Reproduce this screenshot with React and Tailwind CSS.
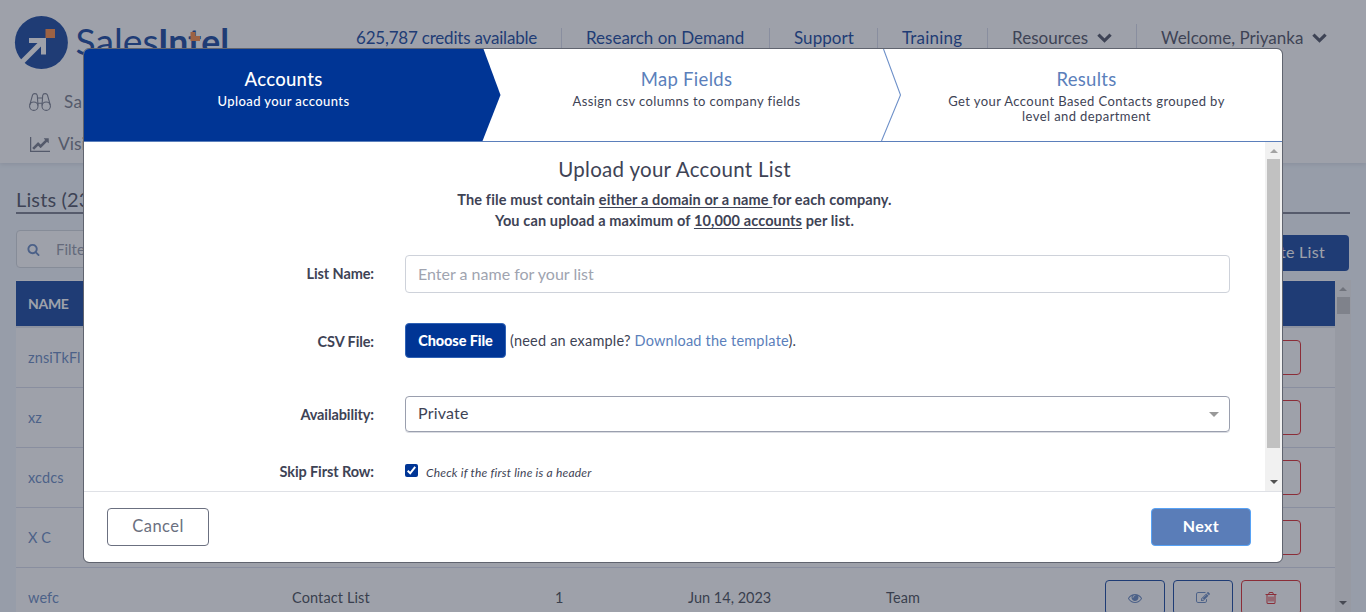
import React from 'react';

const paths = {
  chart: 'M2048 1536v128h-2048v-1536h128v1408h1920zm-128-1248v435q0 21-19.5 29.5t-35.5-7.5l-121-121-633 633q-10 10-23 10t-23-10l-233-233-416 416-192-192 585-585q10-10 23-10t23 10l233 233 464-464-121-121q-16-16-7.5-35.5t29.5-19.5h435q14 0 23 9t9 23z',
  eye: 'M1664 960q-152-236-381-353 61 104 61 225 0 185-131.5 316.5t-316.5 131.5-316.5-131.5-131.5-316.5q0-121 61-225-229 117-381 353 133 205 333.5 326.5t434.5 121.5 434.5-121.5 333.5-326.5zm-720-384q0-20-14-34t-34-14q-125 0-214.5 89.5t-89.5 214.5q0 20 14 34t34 14 34-14 14-34q0-86 61-147t147-61q20 0 34-14t14-34zm848 384q0 34-20 69-140 230-376.5 368.5t-499.5 138.5-499.5-139-376.5-368q-20-35-20-69t20-69q140-229 376.5-368t499.5-139 499.5 139 376.5 368q20 35 20 69z',
  edit: 'M888 1184l116-116-152-152-116 116v56h96v96h56zm440-720q-16-16-33 1l-350 350q-17 17-1 33t33-1l350-350q17-17 1-33zm80 594v190q0 119-84.5 203.5t-203.5 84.5h-832q-119 0-203.5-84.5t-84.5-203.5v-832q0-119 84.5-203.5t203.5-84.5h832q63 0 117 25 15 7 18 23 3 17-9 29l-49 49q-14 14-32 8-23-6-45-6h-832q-66 0-113 47t-47 113v832q0 66 47 113t113 47h832q66 0 113-47t47-113v-126q0-13 9-22l64-64q15-15 35-7t20 29zm-96-738l288 288-672 672h-288v-288zm444 132l-92 92-288-288 92-92q28-28 68-28t68 28l152 152q28 28 28 68t-28 68z',
  trash: 'M704 736v576q0 14-9 23t-23 9h-64q-14 0-23-9t-9-23v-576q0-14 9-23t23-9h64q14 0 23 9t9 23zm256 0v576q0 14-9 23t-23 9h-64q-14 0-23-9t-9-23v-576q0-14 9-23t23-9h64q14 0 23 9t9 23zm256 0v576q0 14-9 23t-23 9h-64q-14 0-23-9t-9-23v-576q0-14 9-23t23-9h64q14 0 23 9t9 23zm128 724v-948h-896v948q0 22 7 40.5t14.5 27 10.5 8.5h832q3 0 10.5-8.5t14.5-27 7-40.5zm-672-1076h448l-48-117q-7-9-17-11h-317q-10 2-17 11zm928 32v64q0 14-9 23t-23 9h-96v948q0 83-47 143.5t-113 60.5h-832q-66 0-113-58.5t-47-141.5v-952h-96q-14 0-23-9t-9-23v-64q0-14 9-23t23-9h309l70-167q15-37 54-63t79-26h320q40 0 79 26t54 63l70 167h309q14 0 23 9t9 23z',
  search: 'M1216 832q0-185-131.5-316.5t-316.5-131.5-316.5 131.5-131.5 316.5 131.5 316.5 316.5 131.5 316.5-131.5 131.5-316.5zm512 832q0 52-38 90t-90 38q-54 0-90-38l-343-342q-179 124-399 124-143 0-273.5-55.5t-225-150-150-225-55.5-273.5 55.5-273.5 150-225 225-150 273.5-55.5 273.5 55.5 225 150 150 225 55.5 273.5q0 220-124 399l343 343q37 37 37 90z',
};

function Icon({ name, className, box = '0 0 1792 1792' }) {
  return (
    <svg viewBox={box} className={className} fill="currentColor">
      <path d={paths[name]} />
    </svg>
  );
}

function Chevron() {
  return (
    <svg viewBox="0 0 15 10" className="h-[10px] w-[15px]" fill="none" stroke="currentColor" strokeWidth="3.2">
      <path d="M1.4 1.6 7.5 7.6 13.6 1.6" />
    </svg>
  );
}

function Triangle({ up, className }) {
  return (
    <svg viewBox="0 0 8 4" className={className} fill="currentColor">
      <path d={up ? 'M0 4 4 0 8 4Z' : 'M0 0H8L4 4Z'} />
    </svg>
  );
}

function Logo() {
  return (
    <svg viewBox="0 0 230 74" className="h-[74px] w-[230px] shrink-0">
      <circle cx="41.4" cy="42.4" r="26.5" fill="#003595" />
      <path d="M22 62 43 41" stroke="#fff" strokeWidth="5" />
      <path d="M29 38H46V54.5H41V43H29Z" fill="#fff" />
      <rect x="45.5" y="29" width="9.5" height="9" fill="#fb8032" />
      <text x="75.5" y="55" fontSize="36" textLength="83" lengthAdjust="spacingAndGlyphs" fill="#003595" className="font-['Lato',sans-serif]">Sales</text>
      <text x="158" y="55" fontSize="36" fontWeight="700" textLength="71" lengthAdjust="spacingAndGlyphs" fill="#003595" className="font-['Lato',sans-serif]">Intel</text>
      <path d="M190.5 32H195.5V36H200V41H190.5Z" fill="#fb8032" />
    </svg>
  );
}

function Binoculars() {
  return (
    <svg viewBox="0 0 22 18" className="h-[18px] w-[22px]" fill="none" stroke="currentColor" strokeWidth="1.1">
      <circle cx="4.8" cy="13.2" r="4.2" />
      <circle cx="17.2" cy="13.2" r="4.2" />
      <path d="M.8 11.8 3.5 2.2Q4 .6 5.8.6 8 .6 8.3 2.5L9 12.5M21.2 11.8 18.5 2.2Q18 .6 16.2.6 14 .6 13.7 2.5L13 12.5M8.4 5H13.6M8.8 10.2H13.2" />
    </svg>
  );
}

const nav = [
  { text: '625,787 credits available', cls: 'w-[206px] h-5 border-r tracking-[-0.2px]' },
  { text: 'Research on Demand', cls: 'w-[208px] h-5 border-r pl-6' },
  { text: 'Support', cls: 'w-[108px] h-5 border-r pl-6 tracking-[0.05px]' },
  { text: 'Training', cls: 'w-[110px] h-5 border-r pl-6 tracking-[0.2px]' },
  { text: 'Resources', menu: true, cls: 'w-[149px] h-7 border-r pl-6 tracking-[0.05px] text-[#3e4355]' },
  { text: 'Welcome, Priyanka', menu: true, cls: 'h-5 pl-6 text-[#3e4355]' },
];

const rows = [
  { name: 'znsiTkFl' },
  { name: 'xz' },
  { name: 'xcdcs' },
  { name: 'X C' },
  { name: 'wefc', type: 'Contact List', count: '1', date: 'Jun 14, 2023', access: 'Team' },
];

function Page() {
  return (
    <div className="flex h-full flex-col bg-[#f0f7fd]">
      <header className="h-[163px] shrink-0 bg-white shadow-[0_1px_5px_rgba(60,70,90,0.18)]">
        <div className="flex h-[76px]">
          <Logo />
          <nav className="flex h-[75px] items-center pl-[126px] text-[17px] text-[#003595]">
            {nav.map((n) => (
              <div key={n.text} className={`flex shrink-0 items-center gap-[9px] whitespace-nowrap border-[#d4d9e8] leading-5 ${n.cls}`}>
                {n.text}
                {n.menu && <Chevron />}
              </div>
            ))}
          </nav>
        </div>
        <div className="mt-4 flex h-5 items-center gap-[13px] pl-[29px] text-[17px] text-[#6b7080]">
          <Binoculars />
          <span className="tracking-[0.3px]">Sales</span>
        </div>
        <div className="mt-[22px] flex h-5 items-center gap-2 pl-[30px] text-[17.5px] text-[#6b7080]">
          <Icon name="chart" box="0 128 2048 1536" className="h-[15px] w-5" />
          <span>Visitors</span>
        </div>
      </header>
      <div className="flex min-h-0 flex-1 flex-col pl-4 pr-[15px]">
        <h1 className="mr-px mt-[23px] h-7 shrink-0 border-b-2 border-[#6e7383] text-[20px] leading-[26px] tracking-[0.15px] text-[#3e4355]">Lists (23)</h1>
        <div className="mt-4 flex h-[38px] shrink-0 justify-between">
          <div className="flex h-[38px] w-[300px] items-center rounded border border-[#ced4da] bg-white pl-[10px] text-[15px] text-[#8a90a0]">
            <Icon name="search" className="mr-4 h-[13px] w-[13px] text-[#5b7fbb]" />
            Filter
          </div>
          <button className="mr-[2px] mt-[5px] h-9 rounded bg-[#003595] px-6 pb-[2px] text-[16px] tracking-[0.3px] text-white">Create List</button>
        </div>
        <div className="mt-3 flex min-h-0 flex-1">
          <div className="flex flex-1 flex-col bg-white">
            <div className="mt-px flex h-[47px] shrink-0 items-center border-b-2 border-[#dee2ea] bg-[#003595] pb-px pl-3 text-[14px] font-bold tracking-[-0.3px] text-white">NAME</div>
            {rows.map((r) => (
              <div key={r.name} className="flex h-[60px] shrink-0 border-b border-[#d4d9e8] text-[14.5px] leading-[59px] tracking-[0.12px] text-[#343a46]">
                <span className="w-[276px] pl-3 text-[#5b7fbb]">{r.name}</span>
                <span className="w-[263px]">{r.type}</span>
                <span className="w-[133px]">{r.count}</span>
                <span className="w-[198px] tracking-[0px]">{r.date}</span>
                <span className="w-[219px]">{r.access}</span>
                <div className="flex gap-2 pt-3">
                  <div className="flex h-[35px] w-[60px] items-center justify-center rounded border border-[#003595] text-[#5b7fbb]"><Icon name="eye" className="h-[14px] w-[14px]" /></div>
                  <div className="flex h-[35px] w-[60px] items-center justify-center rounded border border-[#003595] text-[#5b7fbb]"><Icon name="edit" className="h-[14px] w-[14px]" /></div>
                  <div className="flex h-[35px] w-[60px] items-center justify-center rounded border border-[#d9161a] text-[#d9161a]"><Icon name="trash" className="h-[14px] w-[14px]" /></div>
                </div>
              </div>
            ))}
          </div>
          <div className="flex w-4 shrink-0 flex-col items-center bg-[#f1f1f1]">
            <Triangle up className="mt-[7px] h-1 w-2 text-[#a3a3a3]" />
            <div className="mt-[6px] h-[17px] w-[13px] bg-[#c1c1c1]" />
            <Triangle className="mb-[7px] mt-auto h-1 w-2 text-[#505050]" />
          </div>
        </div>
      </div>
    </div>
  );
}

function Step({ title, text, cls, titleCls }) {
  return (
    <div className={`flex flex-1 flex-col items-center pt-[18px] text-center ${cls}`}>
      <div className={`text-[18.5px] leading-6 tracking-[0.3px] ${titleCls}`}>{title}</div>
      <div className="mt-[3px] w-[300px] text-[13px] leading-[15px] tracking-[0.41px]">{text}</div>
    </div>
  );
}

function Label({ children }) {
  return <div className="w-[290px] shrink-0 text-right text-[14.5px] font-bold leading-5 tracking-[-0.1px]">{children}</div>;
}

function Modal() {
  return (
    <div className="flex h-[515px] w-[1200px] flex-col overflow-hidden rounded-[6px] border border-[#60646f] bg-white bg-clip-padding text-[#3e4355]">
      <div className="relative flex h-[93px] shrink-0 border-b border-[#5b7fbb]">
        <svg viewBox="0 0 1198 92" className="absolute inset-0 h-[92px] w-[1198px]">
          <path d="M0 0H399.5L416.5 46 398.5 92H0Z" fill="#003595" />
          <path d="M799.5 0 816.5 46 797.5 92" fill="none" stroke="#6f91c9" strokeWidth="1.1" />
        </svg>
        <div className="relative flex w-full">
          <Step title="Accounts" text="Upload your accounts" cls="pl-1 font-medium text-white" titleCls="" />
          <Step title="Map Fields" text="Assign csv columns to company fields" cls="pl-3" titleCls="text-[#5b7fbb]" />
          <Step title="Results" text="Get your Account Based Contacts grouped by level and department" cls="pl-[9px]" titleCls="text-[#5b7fbb]" />
        </div>
      </div>
      <div className="flex h-[349px] shrink-0">
        <div className="min-w-0 flex-1 overflow-hidden">
          <h2 className="mt-[15px] text-center text-[20.5px] leading-6 tracking-[0.3px]">Upload your Account List</h2>
          <p className="mt-2 text-center text-[14.5px] font-bold leading-[21px] tracking-[0.12px]">
            The file must contain <u className="underline-offset-2">either a domain or a name </u>for each company.<br />
            You can upload a maximum of <u className="underline-offset-2">10,000 accounts</u> per list.
          </p>
          <div className="mt-6 flex h-[38px] items-center gap-[31px]">
            <Label>List Name:</Label>
            <div className="flex h-[38px] w-[825px] items-center rounded border border-[#ced2da] pl-3 text-[16px] text-[#a0a4b0]">Enter a name for your list</div>
          </div>
          <div className="mt-[30px] flex h-[35px] items-center">
            <div className="mr-[31px] pt-[3px]"><Label>CSV File:</Label></div>
            <button className="h-[35px] w-[101px] rounded border border-[#2f62b5] bg-[#003595] text-[14.5px] font-black tracking-[-0.1px] text-white">Choose File</button>
            <span className="ml-1 text-[14.5px] tracking-[0.2px]">(need an example? <span className="text-[#5b7fbb]">Download the template</span>).</span>
          </div>
          <div className="mt-[38px] flex h-[37px] items-center gap-[31px]">
            <Label>Availability:</Label>
            <div className="mb-px flex h-9 w-[825px] items-center justify-between rounded border border-[#9a9fae] pl-3 pr-[10px] text-[16px] shadow-[0_1px_0_#dadce2]">
              <span className="pb-[2px] tracking-[0.2px]">Private</span>
              <Triangle className="h-[5px] w-[10px] text-[#999]" />
            </div>
          </div>
          <div className="mt-[29px] flex h-5 items-center">
            <Label>Skip First Row:</Label>
            <svg viewBox="0 0 13 13" className="mb-[3px] ml-[31px] h-[13px] w-[13px]">
              <rect width="13" height="13" rx="2" fill="#003595" />
              <path d="M2.7 6.8 5.2 9.3 10.2 2.8" fill="none" stroke="#fff" strokeWidth="2" />
            </svg>
            <span className="ml-2 mt-[2px] text-[12px] italic tracking-[0.2px]">Check if the first line is a header</span>
          </div>
        </div>
        <div className="flex w-[17px] shrink-0 flex-col items-center bg-[#f1f1f1]">
          <Triangle up className="mt-[7px] h-1 w-2 text-[#a3a3a3]" />
          <div className="mt-[6px] h-[289px] w-[13px] bg-[#c1c1c1]" />
          <Triangle className="mb-[7px] mt-auto h-1 w-2 text-[#505050]" />
        </div>
      </div>
      <div className="flex flex-1 items-start justify-between border-t border-[#dfe1e6] pl-[23px] pr-[31px] pt-4">
        <button className="h-[38px] w-[102px] rounded border border-[#6b7080] pb-[2px] text-[16.5px] tracking-[0.45px] text-[#6b7080]">Cancel</button>
        <button className="h-[38px] w-[100px] rounded border border-[#57a2f5] bg-[#5a7db8] pb-[2px] text-[16px] font-bold tracking-[0.4px] text-white">Next</button>
      </div>
    </div>
  );
}

export default function App() {
  return (
    <div className="relative h-[612px] w-[1366px] overflow-hidden font-['Lato',sans-serif]">
      <Page />
      <div className="absolute inset-0 bg-[rgba(62,67,85,0.5)] pl-[83px] pt-12">
        <Modal />
      </div>
    </div>
  );
}
